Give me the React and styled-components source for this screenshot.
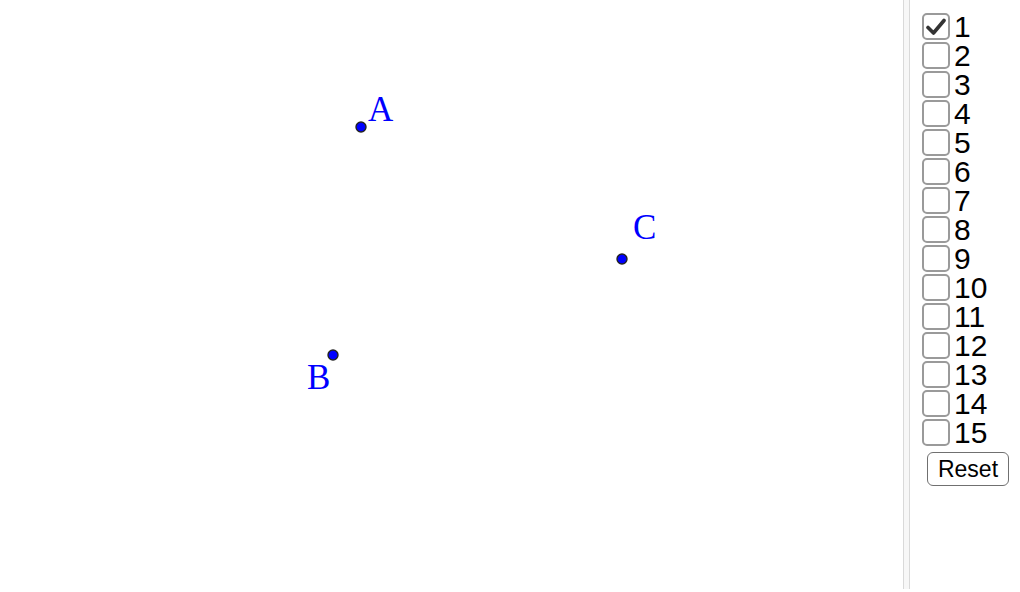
import { useState } from 'react';
import styled, { createGlobalStyle } from 'styled-components';

const GlobalStyle = createGlobalStyle`
  html, body {
    margin: 0;
    padding: 0;
    background: #fff;
    font-family: 'Liberation Sans', Arial, sans-serif;
  }
`;

const Page = styled.div`
  display: flex;
  width: 1020px;
  height: 590px;
  overflow: hidden;
`;

const Canvas = styled.svg`
  width: 903px;
  height: 590px;
  flex: none;
  display: block;
`;

const Divider = styled.div`
  width: 5px;
  height: 589px;
  flex: none;
  background: #f7f7f7;
  border-left: 1px solid #d9d9d9;
  border-right: 1px solid #d9d9d9;
`;

const Panel = styled.div`
  display: flex;
  flex-direction: column;
  align-items: flex-start;
  padding: 12px 0 0 12px;
`;

const Row = styled.label`
  display: flex;
  align-items: center;
  height: 29px;
  cursor: pointer;
  user-select: none;
`;

const Box = styled.span`
  box-sizing: border-box;
  width: 28px;
  height: 27px;
  margin: 1px 4px 1px 0;
  border: 2px solid #9a9a9a;
  border-radius: 5px;
  background: #fff;
  display: flex;
  align-items: center;
  justify-content: center;
`;

const Label = styled.span`
  font-size: 30px;
  line-height: 29px;
  color: #000;
`;

const ResetButton = styled.button`
  margin: 5px 0 0 5px;
  width: 82px;
  height: 34px;
  padding: 0;
  font-family: 'Liberation Sans', Arial, sans-serif;
  font-size: 23px;
  color: #000;
  background: #fff;
  border: 1.5px solid #707070;
  border-radius: 6px;
  cursor: pointer;
`;

const points = [
  { name: 'A', x: 361, y: 127, lx: 368, ly: 121 },
  { name: 'B', x: 333, y: 355, lx: 307, ly: 389 },
  { name: 'C', x: 622, y: 259, lx: 633, ly: 239 }
];

const Check = () => (
  <svg width="20" height="18" viewBox="0 0 20 18">
    <path d="M2 9.5 L7.5 15 L18 2.5" fill="none" stroke="#333" strokeWidth="3.6" strokeLinecap="round" strokeLinejoin="round" />
  </svg>
);

export default function App() {
  const initial = Array.from({ length: 15 }, (_, i) => i === 0);
  const [checked, setChecked] = useState(initial);

  const toggle = (i) => {
    setChecked((prev) => prev.map((v, j) => (j === i ? !v : v)));
  };

  return (
    <>
      <GlobalStyle />
      <Page>
        <Canvas viewBox="0 0 903 590">
          {points.map((p) => (
            <g key={p.name}>
              <circle cx={p.x} cy={p.y} r="5" fill="#0000ff" stroke="#222" strokeWidth="1.4" />
              <text x={p.lx} y={p.ly} fill="#0000ff" fontFamily="'Liberation Serif', 'Times New Roman', serif" fontSize="35">
                {p.name}
              </text>
            </g>
          ))}
        </Canvas>
        <Divider />
        <Panel>
          {checked.map((c, i) => (
            <Row key={i} onClick={() => toggle(i)}>
              <Box>{c && <Check />}</Box>
              <Label>{i + 1}</Label>
            </Row>
          ))}
          <ResetButton onClick={() => setChecked(initial)}>Reset</ResetButton>
        </Panel>
      </Page>
    </>
  );
}
